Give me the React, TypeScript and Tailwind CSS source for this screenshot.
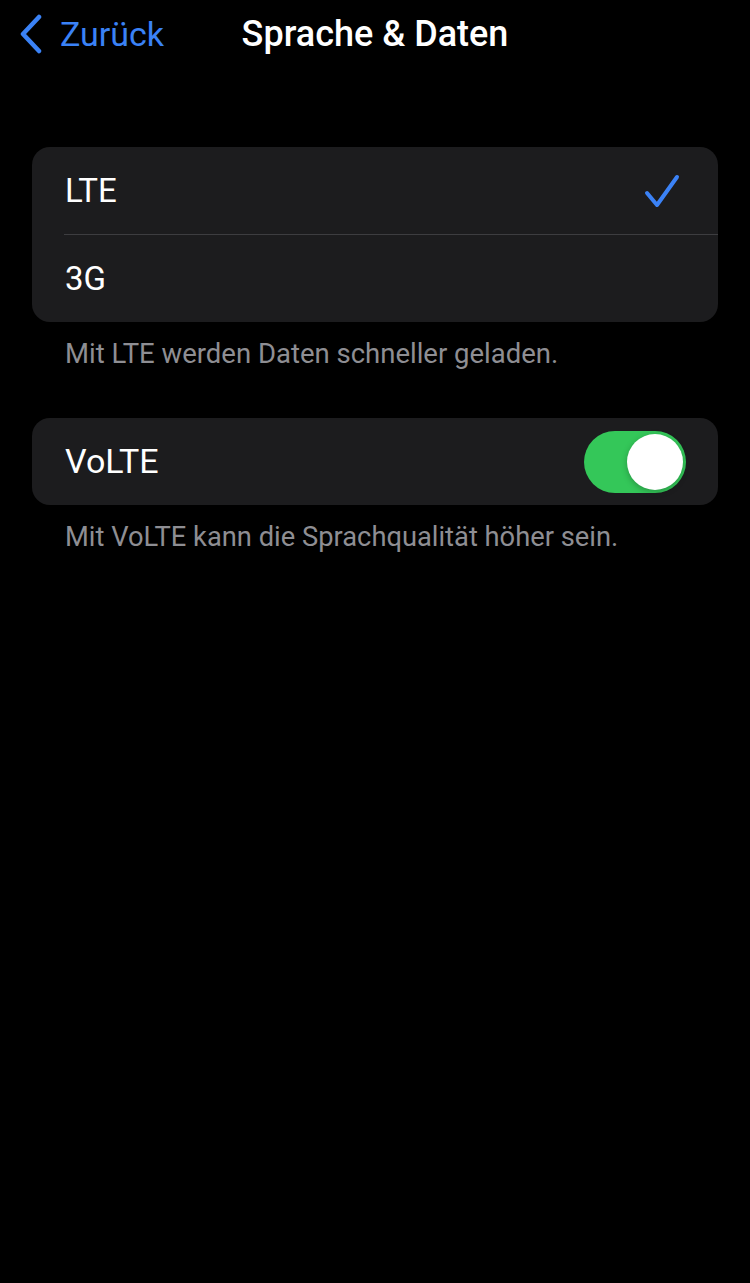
import React from 'react'

export default function App() {
  return (
    <div className="min-h-[1283px] w-[750px] bg-black font-['Roboto',sans-serif] text-white">
      {/* navigation bar */}
      <div className="relative flex h-[68px] items-center">
        <div className="flex items-center pl-[18px] text-[#3a82f6]">
          <svg width="26" height="40" viewBox="0 0 26 40" fill="none">
            <path d="M21 3 L5 20 L21 37" stroke="currentColor" strokeWidth="4.5" strokeLinecap="round" strokeLinejoin="round" />
          </svg>
          <span className="ml-[16px] text-[34px] leading-none">Zurück</span>
        </div>
        <div className="absolute left-1/2 -translate-x-1/2 text-[36px] font-medium leading-none">Sprache &amp; Daten</div>
      </div>

      <div className="px-[32px] pt-[79px]">
        {/* network group */}
        <div className="overflow-hidden rounded-[18px] bg-[#1c1c1e]">
          <div className="flex h-[87px] items-center justify-between pl-[33px] pr-[38px]">
            <span className="text-[33px]">LTE</span>
            <svg width="36" height="34" viewBox="0 0 36 34" fill="none" className="text-[#3b82f6]">
              <path d="M3 19 L13 31 L33 3" stroke="currentColor" strokeWidth="4" strokeLinecap="round" strokeLinejoin="round" />
            </svg>
          </div>
          <div className="ml-[32px] h-px bg-[#3d3d40]" />
          <div className="flex h-[87px] items-center pl-[33px]">
            <span className="text-[33px]">3G</span>
          </div>
        </div>
        <p className="mt-[16px] pl-[33px] text-[27.5px] leading-[32px] text-[#8e8e93]">Mit LTE werden Daten schneller geladen.</p>

        {/* VoLTE group */}
        <div className="mt-[48px] flex h-[87px] items-center justify-between rounded-[18px] bg-[#1c1c1e] pl-[33px] pr-[32px]">
          <span className="text-[34px]">VoLTE</span>
          <div className="flex h-[62px] w-[102px] items-center justify-end rounded-full bg-[#34c759] pr-[3px]">
            <div className="h-[56px] w-[56px] rounded-full bg-white shadow-[0_2px_6px_rgba(0,0,0,0.25)]" />
          </div>
        </div>
        <p className="mt-[16px] pl-[33px] text-[27.3px] leading-[32px] text-[#8e8e93]">Mit VoLTE kann die Sprachqualität höher sein.</p>
      </div>
    </div>
  )
}
